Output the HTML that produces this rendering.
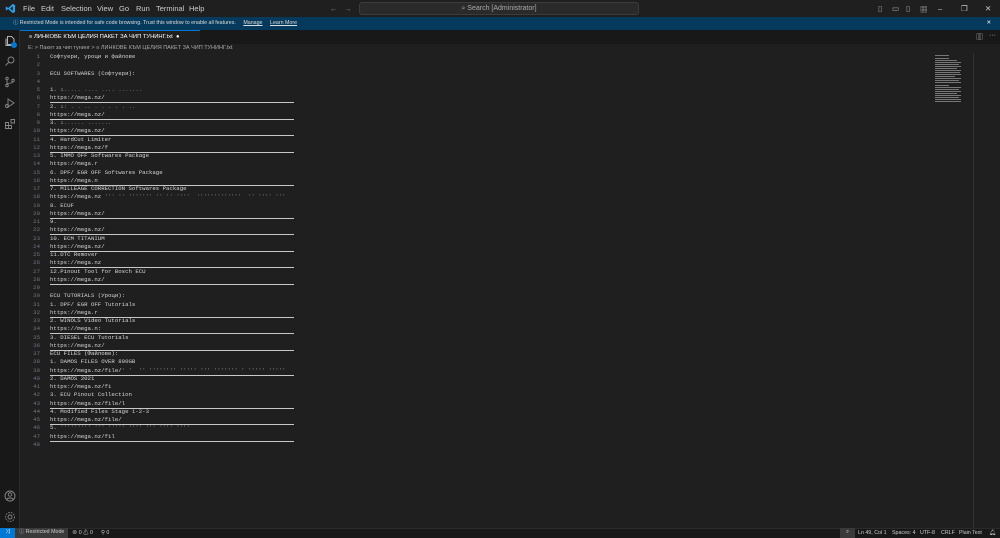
<!DOCTYPE html>
<html><head><meta charset="utf-8"><style>
*{margin:0;padding:0;box-sizing:border-box}
body{width:1000px;height:538px;background:#1f1f1f;overflow:hidden;position:relative;font-family:"Liberation Sans","Noto Sans CJK SC",sans-serif;color:#ccc}
.abs{position:absolute}
#title{left:0;top:0;width:1000px;height:17px;background:#1f1f1f;font-size:7.5px;color:#ccc}
#title span{position:absolute;top:4px}
#search{left:359px;top:2px;width:280px;height:13px;border:1px solid #3c3c3c;background:#2a2a2a;border-radius:3px;font-size:7px;color:#aaa;text-align:center;line-height:11px}
#banner{left:0;top:17px;width:1000px;height:13px;background:#063a5c;font-size:5.3px;color:#ddd;line-height:13px;padding-left:13px}
#banner u{margin-left:6px}
#act{left:0;top:30px;width:20px;height:498px;background:#181818;border-right:1px solid #2b2b2b}
#tabs{left:20px;top:30px;width:980px;height:14px;background:#181818}
#tab{left:20px;top:30px;width:180px;height:14px;background:#1f1f1f;border-top:1px solid #0078d4;font-size:5.8px;color:#fff;line-height:13px;padding-left:9px}
#bc{left:28px;top:45px;font-size:5.5px;color:#aaa}
#lines{left:20px;top:53px;width:900px;font-family:"Liberation Mono","Noto Sans CJK SC",monospace;font-size:5.7px}
.l{height:8.26px;line-height:8.26px;position:relative;white-space:pre}
.n{position:absolute;left:0;width:20px;text-align:right;color:#6e7681}
.t{position:absolute;left:30px;color:#d4d4d4}
.u::after{content:"";position:absolute;left:30px;top:8px;width:244px;height:1px;background:#c8c8c8}
#status{left:0;top:528px;width:1000px;height:10px;background:#181818;border-top:1px solid #2b2b2b;font-size:5.3px;color:#ccc;line-height:9px}
#status span{position:absolute;top:0}
#mm{left:935px;top:55px;width:27px;height:50px}
</style></head><body>
<div id="title" class="abs">
<svg class="abs" style="left:5px;top:3px" width="11" height="11" viewBox="0 0 24 24"><path d="M17 2 L22 4.5 V19.5 L17 22 L7 13 L3 16 L1.5 15 V9 L3 8 L7 11 Z M17 7 L11 12 L17 17 Z" fill="#2a9ee8"/></svg>
<span style="left:23px">File</span><span style="left:41px">Edit</span><span style="left:61px">Selection</span><span style="left:97px">View</span><span style="left:119px">Go</span><span style="left:136px">Run</span><span style="left:156px">Terminal</span><span style="left:189px">Help</span>
<span style="left:330px;color:#888">←</span><span style="left:344px;color:#888">→</span>
<span style="left:878px;color:#aaa">▯</span><span style="left:892px;color:#aaa">▭</span><span style="left:906px;color:#aaa">▯</span><span style="left:920px;color:#aaa">▦</span>
<span style="left:938px">–</span><span style="left:961px">❐</span><span style="left:985px">✕</span>
</div>
<div id="search" class="abs">⌕ Search [Administrator]</div>
<div id="banner" class="abs">ⓘ Restricted Mode is intended for safe code browsing. Trust this window to enable all features. <u>Manage</u> <u>Learn More</u><span style="position:absolute;right:9px;color:#fff">✕</span></div>
<div id="act" class="abs">
<svg class="abs" style="left:4px;top:5px" width="12" height="12" viewBox="0 0 24 24" fill="none" stroke="#ddd" stroke-width="1.6"><path d="M7 3h8l5 5v11H7z M4 7v14h12"/></svg>
<div class="abs" style="left:11px;top:12px;width:6px;height:6px;border-radius:3px;background:#0078d4"></div>
<svg class="abs" style="left:4px;top:25px" width="12" height="12" viewBox="0 0 24 24" fill="none" stroke="#888" stroke-width="1.8"><circle cx="14" cy="10" r="6"/><path d="M9.5 14.5 3 21"/></svg>
<svg class="abs" style="left:4px;top:46px" width="12" height="12" viewBox="0 0 24 24" fill="none" stroke="#888" stroke-width="1.8"><circle cx="6" cy="5" r="2.5"/><circle cx="6" cy="19" r="2.5"/><circle cx="18" cy="9" r="2.5"/><path d="M6 7.5v9M18 11.5c0 4-12 2-12 5"/></svg>
<svg class="abs" style="left:4px;top:67px" width="12" height="12" viewBox="0 0 24 24" fill="none" stroke="#888" stroke-width="1.8"><path d="M8 4l12 8-12 8z"/><circle cx="6" cy="18" r="3"/></svg>
<svg class="abs" style="left:4px;top:88px" width="12" height="12" viewBox="0 0 24 24" fill="none" stroke="#888" stroke-width="1.8"><path d="M3 9h6v6H3zM9 15h6v6H9zM3 15h6v6H3zM14 3h7v7h-7z"/></svg>
<svg class="abs" style="left:4px;top:460px" width="12" height="12" viewBox="0 0 24 24" fill="none" stroke="#888" stroke-width="1.8"><circle cx="12" cy="12" r="10"/><circle cx="12" cy="9" r="3.5"/><path d="M5 19c3-4 11-4 14 0"/></svg>
<svg class="abs" style="left:4px;top:481px" width="12" height="12" viewBox="0 0 24 24" fill="none" stroke="#888" stroke-width="1.8"><circle cx="12" cy="12" r="4"/><circle cx="12" cy="12" r="9" stroke-dasharray="3 2.5"/></svg>
</div>
<div id="tabs" class="abs"><span style="position:absolute;right:17px;top:2px;font-size:7px;color:#bbb">▥</span><span style="position:absolute;right:4px;top:2px;font-size:7px;color:#bbb">···</span></div>
<div id="tab" class="abs">≡ ЛИНКОВЕ КЪМ ЦЕЛИЯ ПАКЕТ ЗА ЧИП ТУНИНГ.txt &nbsp;●</div>
<div id="bc" class="abs">E: &gt; Пакет за чип тунинг &gt; ≡ ЛИНКОВЕ КЪМ ЦЕЛИЯ ПАКЕТ ЗА ЧИП ТУНИНГ.txt</div>
<div id="lines" class="abs">
<div class="l"><span class="n">1</span><span class="t">Софтуери, уроци и файлове</span></div>
<div class="l"><span class="n">2</span></div>
<div class="l"><span class="n">3</span><span class="t">ECU SOFTWARES (Софтуери):</span></div>
<div class="l"><span class="n">4</span></div>
<div class="l"><span class="n">5</span><span class="t">1. <span style="color:#888">ı..... .... .... .......</span></span></div>
<div class="l u"><span class="n">6</span><span class="t">https://mega.nz/</span></div>
<div class="l"><span class="n">7</span><span class="t">2. <span style="color:#888">ı: . . .. . . . . . ..</span></span></div>
<div class="l u"><span class="n">8</span><span class="t">https://mega.nz/</span></div>
<div class="l"><span class="n">9</span><span class="t">3. <span style="color:#888">ı...... .......</span></span></div>
<div class="l u"><span class="n">10</span><span class="t">https://mega.nz/</span></div>
<div class="l"><span class="n">11</span><span class="t">4. HardCut Limiter</span></div>
<div class="l u"><span class="n">12</span><span class="t">https://mega.nz/f</span></div>
<div class="l"><span class="n">13</span><span class="t">5. IMMO OFF Softwares Package</span></div>
<div class="l"><span class="n">14</span><span class="t">https://mega.r</span></div>
<div class="l"><span class="n">15</span><span class="t">6. DPF/ EGR OFF Softwares Package</span></div>
<div class="l u"><span class="n">16</span><span class="t">https://mega.n</span></div>
<div class="l"><span class="n">17</span><span class="t">7. MILLEAGE CORRECTION Softwares Package</span></div>
<div class="l"><span class="n">18</span><span class="t">https://mega.nz <span style="color:#777">''' '' ''''''' '' '' ''''  '''''''''''''  '' '''' '''</span></span></div>
<div class="l"><span class="n">19</span><span class="t">8. ECUF</span></div>
<div class="l u"><span class="n">20</span><span class="t">https://mega.nz/</span></div>
<div class="l"><span class="n">21</span><span class="t">9.</span></div>
<div class="l u"><span class="n">22</span><span class="t">https://mega.nz/</span></div>
<div class="l"><span class="n">23</span><span class="t">10. ECM TITANIUM</span></div>
<div class="l u"><span class="n">24</span><span class="t">https://mega.nz/</span></div>
<div class="l"><span class="n">25</span><span class="t">11.DTC Remover</span></div>
<div class="l u"><span class="n">26</span><span class="t">https://mega.nz</span></div>
<div class="l"><span class="n">27</span><span class="t">12.Pinout Tool for Bosch ECU</span></div>
<div class="l u"><span class="n">28</span><span class="t">https://mega.nz/</span></div>
<div class="l"><span class="n">29</span></div>
<div class="l"><span class="n">30</span><span class="t">ECU TUTORIALS (Уроци):</span></div>
<div class="l"><span class="n">31</span><span class="t">1. DPF/ EGR OFF Tutorials</span></div>
<div class="l u"><span class="n">32</span><span class="t">https://mega.r</span></div>
<div class="l"><span class="n">33</span><span class="t">2. WINOLS Video Tutorials</span></div>
<div class="l u"><span class="n">34</span><span class="t">https://mega.n:</span></div>
<div class="l"><span class="n">35</span><span class="t">3. DIESEL ECU Tutorials</span></div>
<div class="l u"><span class="n">36</span><span class="t">https://mega.nz/</span></div>
<div class="l"><span class="n">37</span><span class="t">ECU FILES (Файлове):</span></div>
<div class="l"><span class="n">38</span><span class="t">1. DAMOS FILES OVER 800GB</span></div>
<div class="l u"><span class="n">39</span><span class="t">https://mega.nz/file/<span style="color:#888">' '  '' '''''''' ''''' ''' ''''''' ' ''''' '''''</span></span></div>
<div class="l"><span class="n">40</span><span class="t">2. DAMOS 2021</span></div>
<div class="l"><span class="n">41</span><span class="t">https://mega.nz/fi</span></div>
<div class="l"><span class="n">42</span><span class="t">3. ECU Pinout Collection</span></div>
<div class="l u"><span class="n">43</span><span class="t">https://mega.nz/file/l</span></div>
<div class="l"><span class="n">44</span><span class="t">4. Modified Files Stage 1-2-3</span></div>
<div class="l u"><span class="n">45</span><span class="t">https://mega.nz/file/</span></div>
<div class="l"><span class="n">46</span><span class="t">5. <span style="color:#888">''''''''' ''' ''''' '''' ''' '''' ''''</span></span></div>
<div class="l u"><span class="n">47</span><span class="t">https://mega.nz/fil</span></div>
<div class="l"><span class="n">48</span></div>
</div>
<svg id="mm" class="abs" viewBox="0 0 27 50">
<g fill="#777"><rect x="0" y="0" width="14" height="1"/><rect x="0" y="3" width="14" height="1"/><rect x="0" y="5" width="22" height="1"/><rect x="0" y="7" width="26" height="1"/><rect x="0" y="9" width="24" height="1"/><rect x="0" y="11" width="26" height="1"/><rect x="0" y="13" width="22" height="1"/><rect x="0" y="15" width="26" height="1"/><rect x="0" y="17" width="25" height="1"/><rect x="0" y="19" width="26" height="1"/><rect x="0" y="21" width="20" height="1"/><rect x="0" y="23" width="26" height="1"/><rect x="0" y="25" width="24" height="1"/><rect x="0" y="27" width="26" height="1"/><rect x="0" y="30" width="14" height="1"/><rect x="0" y="32" width="26" height="1"/><rect x="0" y="34" width="24" height="1"/><rect x="0" y="36" width="26" height="1"/><rect x="0" y="38" width="22" height="1"/><rect x="0" y="40" width="26" height="1"/><rect x="0" y="42" width="24" height="1"/><rect x="0" y="44" width="26" height="1"/><rect x="0" y="46" width="26" height="1"/></g>
</svg>
<div class="abs" style="left:973px;top:53px;width:1px;height:475px;background:#333"></div>
<div id="status" class="abs">
<div class="abs" style="left:0;top:-1px;width:15px;height:10px;background:#0078d4;color:#fff;text-align:center">⤨</div>
<div class="abs" style="left:15px;top:-1px;width:53px;height:10px;background:#3a3a3a;padding-left:4px">ⓘ Restricted Mode</div>
<span style="left:72px">⊗ 0 ⚠ 0</span><span style="left:101px">⚲ 0</span>
<div class="abs" style="left:840px;top:-1px;width:15px;height:10px;background:#3a3a3a;text-align:center">⌕</div>
<span style="left:858px">Ln 49, Col 1</span><span style="left:892px">Spaces: 4</span><span style="left:920px">UTF-8</span><span style="left:941px">CRLF</span><span style="left:959px">Plain Text</span><span style="left:989px">🔔︎</span>
</div>
</body></html>
